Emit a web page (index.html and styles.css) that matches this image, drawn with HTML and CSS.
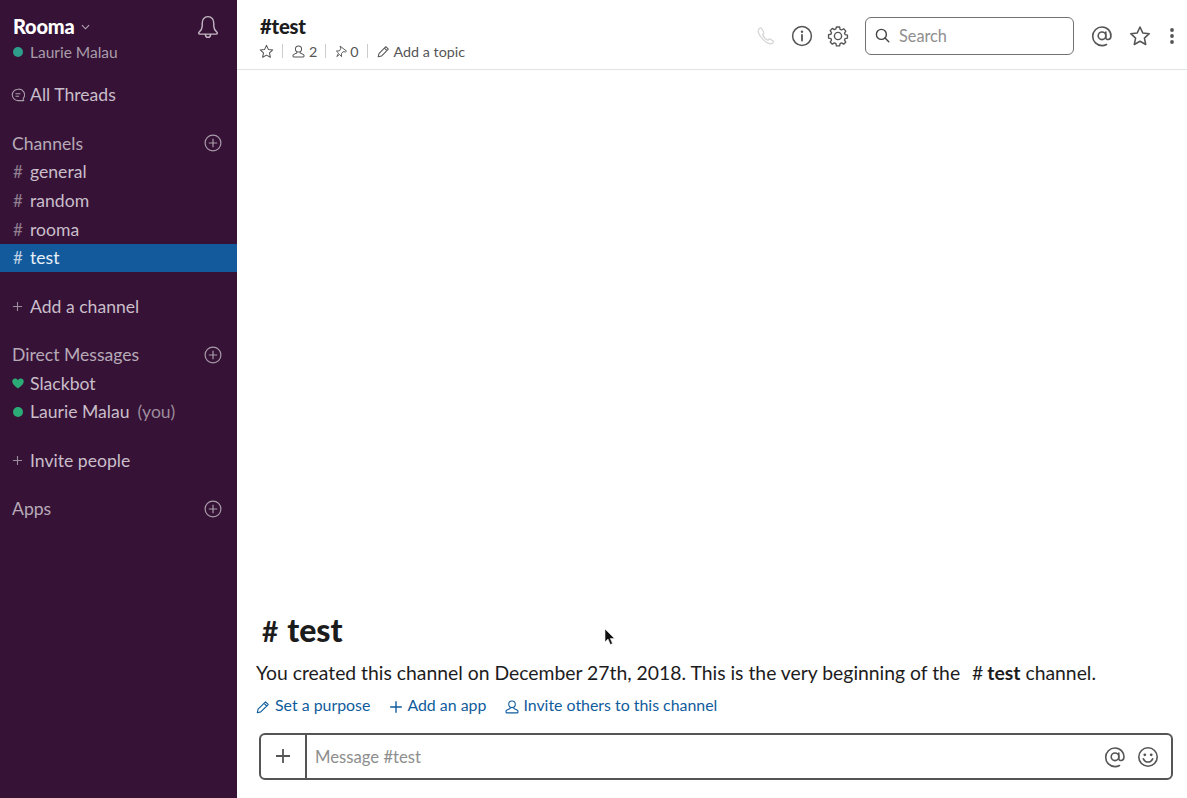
FILE: index.html
```html
<!DOCTYPE html>
<html lang="en">
<head>
<meta charset="utf-8">
<title>#test | Rooma</title>
<link rel="stylesheet" href="styles.css">
</head>
<body>
<svg class="defs" width="0" height="0" aria-hidden="true">
  <defs>
    <symbol id="plus-circle" viewBox="0 0 18 18"><circle cx="9" cy="9" r="7.9" fill="none" stroke="currentColor" stroke-width="1.2"/><path d="M9 4.8v8.4M4.8 9h8.4" fill="none" stroke="currentColor" stroke-width="1.2"/></symbol>
    <symbol id="plus" viewBox="0 0 12 12"><path d="M6 1v10M1 6h10" fill="none" stroke="currentColor" stroke-width="1.2"/></symbol>
    <symbol id="star" viewBox="0 0 20 20"><path d="M10 1.8l2.5 5.4 5.9.7-4.4 4 1.2 5.8-5.2-2.9-5.2 2.9 1.2-5.8-4.4-4 5.9-.7z" fill="none" stroke="currentColor" stroke-width="1.4" stroke-linejoin="round"/></symbol>
    <symbol id="user" viewBox="0 0 14 14"><circle cx="7" cy="4.3" r="3.3" fill="none" stroke="currentColor" stroke-width="1.1"/><path d="M5.2 7.4v1.1L2 10.1c-.7.4-1 .9-1 1.5v.3c0 .6.4 1 1 1h10c.6 0 1-.4 1-1v-.3c0-.6-.3-1.100-1-1.500L8.800 8.500V7.400" fill="none" stroke="currentColor" stroke-width="1.1"/></symbol>
    <symbol id="pencil" viewBox="0 0 14 14"><path d="M9.500 1.800l2.700 2.700-7.400 7.400-3.500.8.800-3.500zM8 3.300l2.700 2.700" fill="none" stroke="currentColor" stroke-width="1.1" stroke-linejoin="round"/></symbol>
    <symbol id="at" viewBox="0 0 22 22"><circle cx="11" cy="10.800" r="3.800" fill="none" stroke="currentColor" stroke-width="1.600"/><path d="M14.800 7v5.500c0 2.800 4.700 2.800 5.100-.8.600-5.200-3.600-9.700-8.900-9.700a9.300 9.300 0 1 0 0 18.600c1.800 0 3.200-.4 4.500-1.100" fill="none" stroke="currentColor" stroke-width="1.600" stroke-linecap="round"/></symbol>
  </defs>
</svg>
<div class="app">
  <nav class="sidebar">
    <header class="team">
      <div class="team-text">
        <div class="team-name">Rooma
          <svg class="caret" viewBox="0 0 10 6"><path d="M1 1l4 4 4-4" fill="none" stroke="currentColor" stroke-width="1.200"/></svg>
        </div>
        <div class="team-user"><span class="dot dot-teal"></span>Laurie Malau</div>
      </div>
      <svg class="bell" viewBox="0 0 22 22"><path d="M11 1.500c-3.600 0-5.300 2.900-5.300 6v2.900c0 2.400-1.300 4-2.900 5.500-.7.700-.3 1.600.6 1.600h15.200c.9 0 1.300-.9.600-1.600-1.600-1.500-2.900-3.100-2.900-5.500V7.500c0-3.100-1.700-6-5.300-6zM8.500 17.500c.2 1.900 1.200 3 2.500 3s2.300-1.100 2.500-3" fill="none" stroke="currentColor" stroke-width="1.300"/></svg>
    </header>

    <a class="row threads"><span class="lead"><svg class="ico-threads" viewBox="0 0 14 14"><path d="M7 1.200a5.700 5.700 0 1 0 0 11.400h5.600c.2 0 .2-.2.100-.3-.6-.6-.7-1.300-.2-2.200A5.700 5.700 0 0 0 7 1.200z" fill="none" stroke="currentColor" stroke-width="1.100"/><path d="M4.500 5.800h5M4.500 8.200h3.500" stroke="currentColor" stroke-width="1.100"/></svg></span>All Threads</a>

    <section class="group">
      <div class="row heading"><span>Channels</span><svg class="add"><use href="#plus-circle"/></svg></div>
      <a class="row"><span class="lead hash">#</span>general</a>
      <a class="row"><span class="lead hash">#</span>random</a>
      <a class="row"><span class="lead hash">#</span>rooma</a>
      <a class="row active"><span class="lead hash">#</span>test</a>
    </section>

    <a class="row group"><span class="lead"><svg class="small-plus"><use href="#plus"/></svg></span>Add a channel</a>

    <section class="group">
      <div class="row heading"><span>Direct Messages</span><svg class="add"><use href="#plus-circle"/></svg></div>
      <a class="row"><span class="lead"><svg class="heart" viewBox="0 0 12 11"><path d="M6 10.500C3.500 8.500.3 6.300.3 3.500.3 1.700 1.600.6 3.100.6 4.300.6 5.400 1.200 6 2.300 6.600 1.200 7.700.6 8.900.6c1.500 0 2.800 1.100 2.800 2.900 0 2.800-3.200 5-5.700 7z" fill="#2bac76"/></svg></span>Slackbot</a>
      <a class="row"><span class="lead"><span class="dot dot-green"></span></span>Laurie Malau<span class="you">(you)</span></a>
    </section>

    <a class="row group"><span class="lead"><svg class="small-plus"><use href="#plus"/></svg></span>Invite people</a>

    <section class="group">
      <div class="row heading"><span>Apps</span><svg class="add"><use href="#plus-circle"/></svg></div>
    </section>
  </nav>

  <main class="main">
    <header class="topbar">
      <div class="title-block">
        <h1 class="channel-title">#test</h1>
        <div class="meta">
          <svg class="meta-star"><use href="#star"/></svg>
          <span class="sep"></span>
          <span class="meta-item"><svg class="meta-ico"><use href="#user"/></svg>2</span>
          <span class="sep"></span>
          <span class="meta-item meta-pins"><svg class="meta-ico" viewBox="0 0 14 14"><path d="M5.500 1.200l7 5.400-1.100.9-2.700-.3-1.800 2.200.2 3.200-2.200-2.400L2 12.500l1.800-3.800L1.500 6.500l3.200-.2 1.500-2.200z" fill="none" stroke="currentColor" stroke-width="1" stroke-linejoin="round"/></svg>0</span>
          <span class="sep"></span>
          <span class="meta-item"><svg class="meta-ico"><use href="#pencil"/></svg>Add a topic</span>
        </div>
      </div>
      <div class="tools">
        <svg class="tool phone" viewBox="0 0 22 22"><path d="M4 2.500c-1.400 1-2 2.500-1.300 4.600 1.800 5.300 7.100 11 12.100 12.300 2 .5 3.500-.2 4.300-1.600.3-.5.200-1-.3-1.300l-3.300-2.100c-.5-.3-.9-.2-1.300.2l-1 1.100c-2.500-1-5-3.600-6-6.300l1.200-1c.4-.4.500-.8.200-1.300L6.200 2.800C5.700 2.100 4.800 2 4 2.500z" fill="none" stroke="currentColor" stroke-width="1.300"/></svg>
        <svg class="tool info" viewBox="0 0 22 22"><circle cx="11" cy="11" r="9.400" fill="none" stroke="currentColor" stroke-width="1.500"/><circle cx="11" cy="6.800" r="1.200" fill="currentColor"/><path d="M11 10v5.500" stroke="currentColor" stroke-width="1.800" stroke-linecap="round"/></svg>
        <svg class="tool gear" viewBox="0 0 22 22"><path d="M9.200 1.500h3.600l.5 2.600 1.700.8 2.300-1.400 2.400 2.600-1.500 2.200.7 1.700 2.600.5v3.400l-2.600.5-.7 1.700 1.500 2.200-2.400 2.300-2.300-1.400-1.700.8-.5 2.600H9.200l-.5-2.600-1.700-.8-2.300 1.400-2.400-2.300 1.500-2.200-.7-1.700-2.600-.5V10.100l2.600-.5.700-1.700-1.500-2.200 2.400-2.600L7 4.500l1.700-.8z" transform="translate(1.100 .6) scale(.9)" fill="none" stroke="currentColor" stroke-width="1.500" stroke-linejoin="round"/><circle cx="11" cy="11" r="3.600" fill="none" stroke="currentColor" stroke-width="1.400"/></svg>
        <div class="search">
          <svg class="search-ico" viewBox="0 0 16 16"><circle cx="6.800" cy="6.800" r="5.300" fill="none" stroke="currentColor" stroke-width="1.500"/><path d="M10.700 10.700l4 4" stroke="currentColor" stroke-width="1.500" stroke-linecap="round"/></svg>
          <span>Search</span>
        </div>
        <svg class="tool at"><use href="#at"/></svg>
        <svg class="tool star"><use href="#star"/></svg>
        <svg class="kebab" viewBox="0 0 4 18"><circle cx="2" cy="3" r="1.900" fill="currentColor"/><circle cx="2" cy="9" r="1.900" fill="currentColor"/><circle cx="2" cy="15" r="1.900" fill="currentColor"/></svg>
      </div>
    </header>

    <div class="messages">
      <h2 class="intro-title"><span class="intro-hash">#</span>test</h2>
      <p class="intro-text">You created this channel on December 27th, 2018. This is the very beginning of the <b class="inline-channel"><span class="inline-hash">#</span>test</b> channel.</p>
      <div class="actions">
        <a class="action"><svg class="action-ico"><use href="#pencil"/></svg>Set a purpose</a>
        <a class="action"><svg class="action-ico"><use href="#plus"/></svg>Add an app</a>
        <a class="action"><svg class="action-ico"><use href="#user"/></svg>Invite others to this channel</a>
      </div>
    </div>

    <footer class="composer">
      <div class="composer-plus"><svg viewBox="0 0 16 16"><path d="M8 1v14M1 8h14" fill="none" stroke="currentColor" stroke-width="1.800"/></svg></div>
      <div class="composer-input">Message #test</div>
      <svg class="composer-ico"><use href="#at"/></svg>
      <svg class="composer-ico smile" viewBox="0 0 22 22"><circle cx="11" cy="11" r="9.200" fill="none" stroke="currentColor" stroke-width="1.600"/><circle cx="7.800" cy="8.800" r="1.400" fill="currentColor"/><circle cx="14.200" cy="8.800" r="1.400" fill="currentColor"/><path d="M6.300 12.800c1 2.200 2.700 3.200 4.700 3.200s3.700-1 4.700-3.200" fill="none" stroke="currentColor" stroke-width="1.600" stroke-linecap="round"/></svg>
    </footer>

    <svg class="cursor" viewBox="0 0 12 18"><path d="M1 1v13l3-3 2.300 5.500 2.200-1L6.300 10.500H10.500z" fill="#111" stroke="#eee" stroke-width=".6"/></svg>
  </main>
</div>
</body>
</html>
```
FILE: styles.css
```css
* { box-sizing: border-box; }
html, body { margin: 0; height: 100%; }
body { font-family: Lato, "Noto Sans", sans-serif; color: #1d1c1d; background: #fff; overflow: hidden; }
.defs { position: absolute; }
.app { display: flex; height: 798px; }

/* Sidebar */
.sidebar { width: 237px; flex: none; background: #361237; color: #c3b8c3; padding-top: 13px; }
.team { display: flex; justify-content: space-between; height: 67.900px; padding: 0 17px 0 13px; }
.team-name { font-size: 20px; font-weight: 900; color: #fff; line-height: 27px; display: flex; align-items: center; gap: 6px; letter-spacing: -.2px; }
.caret { width: 9px; height: 6px; color: #b5a8b5; margin-top: 1px; }
.team-user { font-size: 15.500px; line-height: 22px; color: #a99ca9; display: flex; align-items: center; margin-top: 1px; }
.bell { width: 24px; height: 24px; color: #c3b8c3; margin-top: 2px; }
.dot { display: block; width: 10px; height: 10px; border-radius: 50%; }
.team-user .dot { margin-right: 7px; }
.dot-teal { background: #2e9e8b; }
.dot-green { background: #2bac76; margin-left: 1px; }

.row { display: flex; align-items: center; height: 28.600px; padding: 0 15px .4px 12px; font-size: 17.600px; color: #c9bec9; white-space: nowrap; }
.group { margin-top: 19.800px; }
.threads { color: #c9bec9; }
.lead { width: 18px; flex: none; display: flex; align-items: center; }
.hash { color: #8f7f8f; font-size: 17px; padding-left: 1px; }
.active { background: #125a9c; color: #e9f0f7; }
.active .hash { color: #bcd0e3; }
.heading { justify-content: space-between; color: #b6aab6; }
.add { width: 18px; height: 18px; color: #a99ca9; }
.small-plus { width: 11px; height: 11px; color: #9c8d9c; }
.ico-threads { width: 14px; height: 14px; color: #a99ca9; margin-left: -1px; }
.heart { width: 12px; height: 11px; }
.you { color: #9c8d9c; margin-left: 8px; }

/* Main */
.main { flex: 1; min-width: 0; display: flex; flex-direction: column; position: relative; }
.topbar { height: 70px; flex: none; border-bottom: 1px solid #e3e3e3; display: flex; justify-content: space-between; padding: 13px 10px 0 23px; }
.channel-title { margin: 0; font-size: 20.300px; font-weight: 900; line-height: 26px; color: #1d1c1d; letter-spacing: -.2px; }
.meta { display: flex; align-items: center; height: 20px; margin-top: 2px; font-size: 14.300px; color: #555; }
.meta-star { width: 15px; height: 15px; color: #555; margin-left: -1px; }
.sep { width: 1px; height: 14px; background: #ccc; margin: 0 9px 0 8px; }
.meta-item { display: flex; align-items: center; gap: 4px; }
.meta-pins { gap: 2px; }
.meta-ico { width: 13px; height: 13px; color: #555; }

.tools { display: flex; align-items: center; height: 46px; }
.tool { width: 22px; height: 22px; color: #555; flex: none; }
.phone { color: #d3d3d3; margin-right: 15px; width: 20px; height: 20px; }
.gear { margin-left: 14px; }
.search { width: 209px; height: 38px; margin: 0 17px 0 16px; border: 1px solid #717171; border-radius: 6px; display: flex; align-items: center; padding: 0 0 1px 9px; gap: 9px; font-size: 16.300px; color: #8e8e8e; }
.search-ico { width: 15px; height: 15px; color: #444; }
.at { margin-right: 16px; }
.kebab { width: 4px; height: 18px; color: #555; margin-left: 19px; margin-right: 3px; }

.messages { flex: 1; display: flex; flex-direction: column; justify-content: flex-end; padding: 0 18px 15px 19px; }
.intro-title { margin: 0 0 0 6px; font-size: 32px; line-height: 38px; font-weight: 900; color: #1d1c1d; }
.intro-hash { margin-right: 9px; font-size: 28px; font-weight: 700; }
.intro-text { margin: 10px 0 0; font-size: 19.350px; line-height: 26px; color: #1d1c1d; }
.inline-channel { margin-left: 7px; }
.inline-hash { font-weight: 400; margin-right: 4px; }
.actions { display: flex; gap: 18.500px; margin-top: 6px; line-height: 26px; }
.action { display: flex; align-items: center; gap: 4.500px; font-size: 15.900px; color: #0f5c9c; }
.action:first-child { gap: 5px; }
.action-ico { width: 14px; height: 14px; margin-top: 3px; }

.composer { height: 47px; flex: none; margin: 0 14px 18px 22px; border: 2px solid #555; border-radius: 6px; display: flex; align-items: center; padding-right: 12px; }
.composer-plus { width: 46px; height: 100%; border-right: 2px solid #555; display: flex; align-items: center; justify-content: center; color: #555; flex: none; }
.composer-plus svg { width: 16px; height: 16px; margin-top: -2px; }
.composer-input { flex: 1; padding-left: 8px; font-size: 16.700px; color: #8e8e8e; }
.composer-ico { width: 22px; height: 22px; color: #555; margin-left: 11px; flex: none; }

.cursor { position: absolute; left: 367px; top: 628px; width: 12px; height: 18px; }
```
